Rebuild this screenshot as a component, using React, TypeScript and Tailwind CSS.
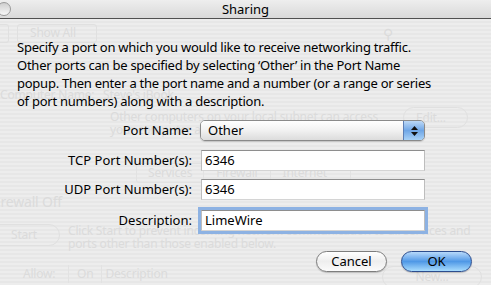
import React from 'react';

const ghost = 'text-[#dbdbdb]';

function TitleBar() {
  return (
    <div className="relative h-[19px] flex items-center justify-center bg-gradient-to-b from-[#eeeeee] to-[#d9d9d9] border-b border-[#505050]">
      {/* close widget, cut off at the left edge */}
      <div className="absolute left-[-3px] top-[2px] w-[14px] h-[14px] rounded-full border border-[#9a9a9a] bg-gradient-to-b from-[#cfcfcf] to-[#f7f7f7]" />
      <span className="text-[13px] text-black leading-none pt-[1px]">Sharing</span>
    </div>
  );
}

// faint content of the preference window that shows through the sheet
function GhostWindow() {
  return (
    <div className={`absolute inset-0 text-[12px] tracking-[-0.2px] ${ghost}`}>
      <div className="flex items-center h-[22px] mt-[3px]">
        <div className="w-[9px] h-[19px] border border-[#e0e0e0] rounded-r-[3px] border-l-0" />
        <div className="ml-[8px] w-[80px] h-[19px] border border-[#e0e0e0] rounded-[3px] flex items-center pl-[12px]">Show All</div>
        <div className="ml-auto mr-[88px] w-[20px] text-[14px]">&#9906;</div>
      </div>
      <div className="mt-[42px] whitespace-nowrap">Computer Name:&nbsp;&nbsp;&nbsp;Steve's iBook</div>
      <div className="flex mt-[6px]">
        <div className="ml-[110px] leading-[13px] whitespace-nowrap">Other computers on your local subnet can access<br />your computer at...</div>
        <div className="ml-auto mr-[23px] mt-[-3px] w-[65px] h-[21px] rounded-full border border-[#e0e0e0] flex items-center pl-[12px]">Edit...</div>
      </div>
      <div className="ml-[136px] mt-[27px] flex h-[20px] w-[215px] border border-[#e2e2e2] rounded-[3px] items-center">
        <div className="px-[11px]">Services</div>
        <div className="border-l border-[#e2e2e2] px-[12px]">Firewall</div>
        <div className="border-l border-[#e2e2e2] px-[12px]">Internet</div>
      </div>
      <div className="mt-[8px] ml-[-10px] text-[14px]">Firewall Off</div>
      <div className="flex mt-[12px]">
        <div className="ml-[-20px] w-[80px] h-[22px] rounded-full border border-[#e0e0e0] flex items-center pl-[30px]">Start</div>
        <div className="ml-[8px] leading-[13px] whitespace-nowrap">Click Start to prevent incoming network communication to all services and<br />ports other than those enabled below.</div>
      </div>
      <div className="flex mt-[10px] items-center">
        <div className="ml-[23px] w-[45px]">Allow:</div>
        <div className="border-l border-r border-[#e2e2e2] px-[8px]">On</div>
        <div className="pl-[3px]">Description</div>
        <div className="ml-auto mr-[9px] w-[100px] h-[22px] rounded-full border border-[#e0e0e0] flex items-center justify-center mt-[6px]">New...</div>
      </div>
    </div>
  );
}

function Field({ label, value, focused }: { label: string; value: string; focused?: boolean }) {
  return (
    <div className="flex items-center h-[21px]">
      <div className="w-[193px] text-right pr-[1px] text-[13px] text-black">{label}</div>
      <div
        className={`ml-[8px] w-[224px] h-[21px] bg-white flex items-center pl-[3px] text-[13px] text-black border border-t-[#8e8e8e] border-x-[#bdbdbd] border-b-[#d4d4d4] ${
          focused ? 'shadow-[0_0_0_3px_#8db2e3]' : ''
        }`}
      >
        {value}
      </div>
    </div>
  );
}

function Popup() {
  return (
    <div className="flex items-center h-[21px]">
      <div className="w-[193px] text-right pr-[1px] text-[13px] text-black">Port Name:</div>
      <div className="ml-[7px] w-[225px] h-[21px] flex rounded-[5px] border border-[#8a8a8a] overflow-hidden shadow-[0_1px_1px_rgba(0,0,0,0.15)]">
        <div className="flex-1 flex items-center pl-[7px] text-[13px] text-black bg-gradient-to-b from-white via-[#f1f1f1] to-[#dcdcdc]">Other</div>
        <div className="w-[21px] flex flex-col items-center justify-center gap-[2px] border-l border-[#5d7fb5] bg-gradient-to-b from-[#bcd8f6] via-[#6fa6e6] to-[#a9d2f7]">
          <svg width="7" height="4" viewBox="0 0 7 4"><path d="M3.5 0 L7 4 L0 4 Z" fill="#111" /></svg>
          <svg width="7" height="4" viewBox="0 0 7 4"><path d="M0 0 L7 0 L3.5 4 Z" fill="#111" /></svg>
        </div>
      </div>
    </div>
  );
}

function Sheet() {
  return (
    <div className="absolute inset-0 pl-[17px] pr-[10px]">
      <p className="mt-[19px] text-[13px] leading-[18px] text-black whitespace-nowrap tracking-[-0.25px]">
        Specify a port on which you would like to receive networking traffic.<br />
        Other ports can be specified by selecting ‘Other’ in the Port Name<br />
        popup. Then enter a the port name and a number (or a range or series<br />
        of port numbers) along with a description.
      </p>
      <div className="ml-[-17px] mt-[10px] flex flex-col gap-[8px]">
        <Popup />
        <div className="mt-[1px]"><Field label="TCP Port Number(s):" value="6346" /></div>
        <Field label="UDP Port Number(s):" value="6346" />
        <div className="mt-[2px]"><Field label="Description:" value="LimeWire" focused /></div>
      </div>
      <div className="flex justify-end gap-[14px] mt-[20px] mr-[9px]">
        <button className="w-[71px] h-[21px] rounded-full border border-[#7d7d7d] bg-gradient-to-b from-white via-[#eeeeee] to-[#fbfbfb] text-[13px] text-black shadow-[0_1px_1px_rgba(0,0,0,0.2)]">
          Cancel
        </button>
        <button className="w-[71px] h-[21px] rounded-full border border-[#2c4d8e] bg-gradient-to-b from-[#b7d9fa] via-[#4f98e6] to-[#a8dcfd] text-[13px] text-black shadow-[0_1px_1px_rgba(0,0,0,0.2)]">
          OK
        </button>
      </div>
    </div>
  );
}

export default function App() {
  return (
    <div className="w-[491px] h-[285px] overflow-hidden font-['Noto_Sans',sans-serif] bg-[#ebebeb]">
      <TitleBar />
      <div className="relative h-[266px] bg-[repeating-linear-gradient(180deg,#ededed_0px,#ededed_2px,#e7e7e7_2px,#e7e7e7_4px)]">
        <GhostWindow />
        <Sheet />
      </div>
    </div>
  );
}
